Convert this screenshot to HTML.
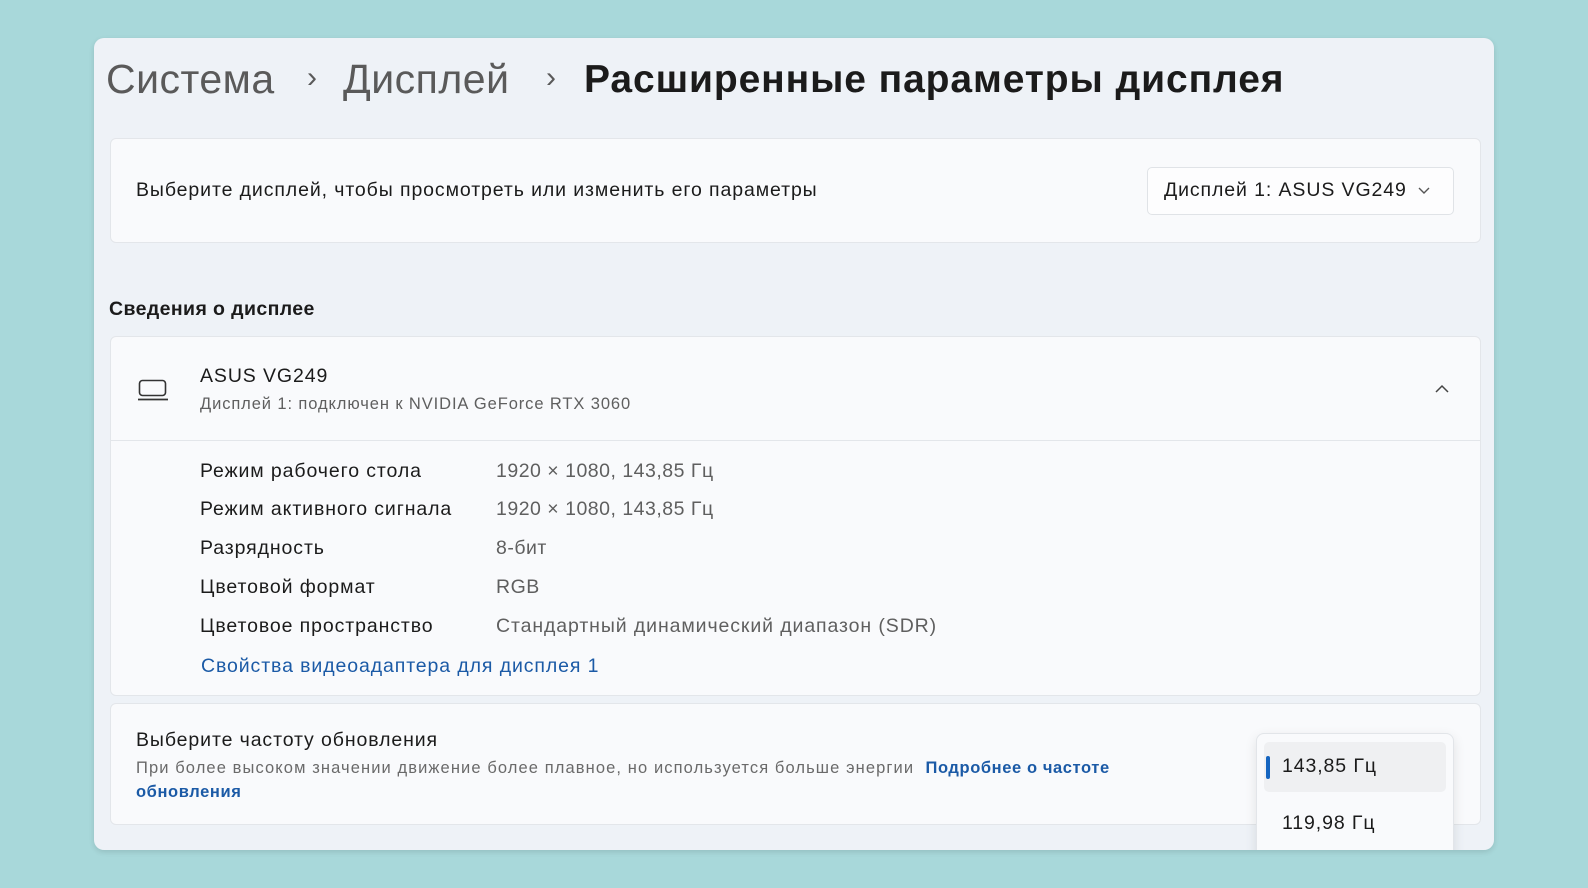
<!DOCTYPE html>
<html><head><meta charset="utf-8"><style>
*{margin:0;padding:0;box-sizing:border-box}
body{width:1588px;height:888px;background:#a8d8da;position:relative;overflow:hidden;font-family:"Liberation Sans","DejaVu Sans",sans-serif;color:#1b1b1b}
.win{position:absolute;left:94px;top:38px;width:1400px;height:812px;background:#eef2f7;border-radius:10px;overflow:hidden;box-shadow:0 2px 6px rgba(0,0,0,.12)}
.t{position:absolute;white-space:nowrap;line-height:1}
.card{position:absolute;background:#f9fafc;border:1px solid #e3e6ea;border-radius:6px}
.lbl{font-size:19.5px;color:#1b1b1b;letter-spacing:.9px}
.val{font-size:19.5px;color:#5f5f5f;letter-spacing:.5px}
</style></head><body>
<div class="win">
  <div class="t" style="left:12px;top:21px;font-size:41px;color:#5a5a5a;letter-spacing:.5px">Система</div>
  <div class="t" style="left:213px;top:25px;font-size:30px;color:#5a5a5a">›</div>
  <div class="t" style="left:249px;top:21px;font-size:41px;color:#5a5a5a;letter-spacing:.5px">Дисплей</div>
  <div class="t" style="left:452px;top:25px;font-size:30px;color:#5a5a5a">›</div>
  <div class="t" style="left:490px;top:22px;font-size:39px;font-weight:bold;color:#1b1b1b;letter-spacing:.9px">Расширенные параметры дисплея</div>

  <div class="card" style="left:16px;top:100px;width:1371px;height:105px"></div>
  <div class="t lbl" style="left:42px;top:143px">Выберите дисплей, чтобы просмотреть или изменить его параметры</div>
  <div class="card" style="left:1053px;top:129px;width:307px;height:48px;background:#fdfdfe;border-color:#e0e3e7;border-radius:5px"></div>
  <div class="t lbl" style="left:1070px;top:143px">Дисплей 1: ASUS VG249</div>
  <svg style="position:absolute;left:1323px;top:147px" width="14" height="10" viewBox="0 0 14 10"><path d="M2 3l5 5 5-5" fill="none" stroke="#555" stroke-width="1.4"/></svg>

  <div class="t" style="left:15px;top:262px;font-size:19.5px;font-weight:bold;color:#1b1b1b;letter-spacing:.4px">Сведения о дисплее</div>

  <div class="card" style="left:16px;top:298px;width:1371px;height:360px"></div>
  <div style="position:absolute;left:17px;top:402px;width:1369px;height:1px;background:#e3e6ea"></div>
  <svg style="position:absolute;left:43px;top:340px" width="32" height="24" viewBox="0 0 32 24"><rect x="2.5" y="2.5" width="26" height="15" rx="3" fill="none" stroke="#333" stroke-width="1.6"/><path d="M1 21.5h30" stroke="#333" stroke-width="1.8"/></svg>
  <div class="t lbl" style="left:106px;top:329px">ASUS VG249</div>
  <div class="t" style="left:106px;top:358px;font-size:16.5px;color:#5f5f5f;letter-spacing:.9px">Дисплей 1: подключен к NVIDIA GeForce RTX 3060</div>
  <svg style="position:absolute;left:1340px;top:345px" width="16" height="12" viewBox="0 0 16 12"><path d="M2 9l6-6 6 6" fill="none" stroke="#444" stroke-width="1.5"/></svg>

  <div class="t lbl" style="left:106px;top:424px">Режим рабочего стола</div><div class="t val" style="left:402px;top:424px">1920 × 1080, 143,85 Гц</div>
  <div class="t lbl" style="left:106px;top:462px">Режим активного сигнала</div><div class="t val" style="left:402px;top:462px">1920 × 1080, 143,85 Гц</div>
  <div class="t lbl" style="left:106px;top:501px">Разрядность</div><div class="t val" style="left:402px;top:501px">8-бит</div>
  <div class="t lbl" style="left:106px;top:540px">Цветовой формат</div><div class="t val" style="left:402px;top:540px">RGB</div>
  <div class="t lbl" style="left:106px;top:579px">Цветовое пространство</div><div class="t val" style="left:402px;top:579px;letter-spacing:.9px">Стандартный динамический диапазон (SDR)</div>
  <div class="t lbl" style="left:107px;top:619px;color:#1b5aa6">Свойства видеоадаптера для дисплея 1</div>

  <div class="card" style="left:16px;top:665px;width:1371px;height:122px"></div>
  <div class="t lbl" style="left:42px;top:693px">Выберите частоту обновления</div>
  <div class="t" style="left:42px;top:722px;font-size:16.5px;color:#6a6a6a;letter-spacing:1.1px">При более высоком значении движение более плавное, но используется больше энергии&nbsp; <b style="color:#1b5aa6;letter-spacing:.6px">Подробнее о частоте</b></div>
  <div class="t" style="left:42px;top:746px;font-size:16.5px;font-weight:bold;color:#1b5aa6;letter-spacing:.6px">обновления</div>

  <div style="position:absolute;left:1162px;top:695px;width:198px;height:140px;background:#f9fafc;border:1px solid #e2e5e9;border-radius:8px;box-shadow:0 4px 12px rgba(0,0,0,.1)"></div>
  <div style="position:absolute;left:1170px;top:704px;width:182px;height:50px;background:#eff0f2;border-radius:5px"></div>
  <div style="position:absolute;left:1172px;top:718px;width:4px;height:23px;background:#1565c0;border-radius:2px"></div>
  <div class="t lbl" style="left:1188px;top:719px">143,85 Гц</div>
  <div class="t lbl" style="left:1188px;top:776px">119,98 Гц</div>
</div>
</body></html>
